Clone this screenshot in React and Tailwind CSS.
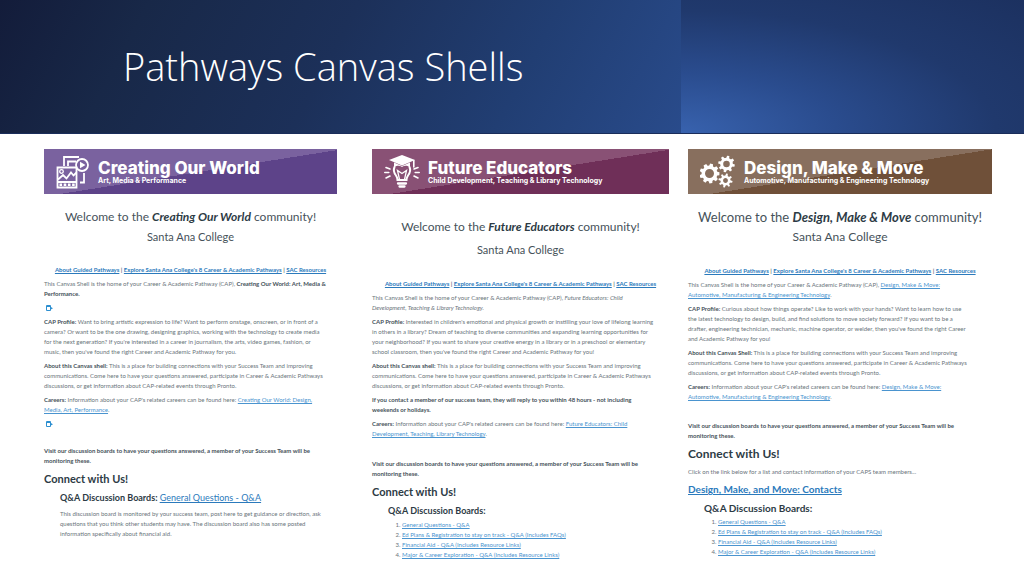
import React from 'react';

const MediaIcon = () => (
  <svg viewBox="0 0 34 34" className="w-[34px] h-[34px] shrink-0" fill="none" stroke="white" strokeWidth="1.8">
    <path d="M8 11V2H23M12 11V6.5H20" />
    <circle cx="26" cy="10" r="6" />
    <path d="M24 6.800v6.400l5.500-3.200z" fill="white" stroke="none" />
    <path d="M28 18V27.500H24" />
    <path d="M1.500 12.500H20.500V32.500H1.500zM1.500 27H20.500" />
    <circle cx="5.500" cy="16.500" r="1.800" strokeWidth="1.300" />
    <path d="M2 24.500l5-4.500 3.500 3.500 4.500-6 2.500 3 3-3" />
    <path d="M3.500 29.800h15.500" strokeWidth="2.600" strokeDasharray="2.600 1.600" />
  </svg>
);

const BulbIcon = () => (
  <svg viewBox="0 0 36 34" className="w-9 h-[34px] shrink-0" fill="none" stroke="white" strokeWidth="1.6" strokeLinecap="round">
    <path d="M18 0L31 5 18 10.500 5 5z" fill="white" stroke="none" />
    <path d="M10 7.500v5c2-2 5.500-2.500 8-.5 2.500-2 6-1.500 8 .5v-5L18 11z" fill="white" stroke="none" />
    <path d="M29.800 5.500V12" />
    <path d="M10.500 12c-1.500 3.500-.5 6 1.500 8.500 1 1.500 1.500 3 1.500 4.500h9c0-1.500.5-3 1.500-4.500 2-2.500 3-5 1.500-8.500" strokeWidth="2" />
    <path d="M15.500 24.500L13.500 15.500l4.500 3 4.500-3-2 9" strokeWidth="1.300" />
    <path d="M14 28.500h8M15.500 31.500h5" strokeWidth="2.300" />
    <path d="M2 12.500l4 1.500M2 23l4-2M0.800 17.500h4M34 12.500l-4 1.500M34 23l-4-2M35.200 17.500h-4" />
  </svg>
);

const Gear = ({ cx, cy, r, teeth, width }) => (
  <g transform={`translate(${cx} ${cy})`}>
    <circle r={r} fill="none" stroke="white" strokeWidth={width} />
    {Array.from({ length: teeth }, (_, i) => (
      <path
        key={i}
        d={`M${-r * 0.34} ${-r}L${-r * 0.24} ${-r - width / 2 - 2}H${r * 0.24}L${r * 0.34} ${-r}z`}
        fill="white"
        transform={`rotate(${(360 / teeth) * i + 12})`}
      />
    ))}
  </g>
);

const GearsIcon = () => (
  <svg viewBox="0 0 36 34" className="w-9 h-[34px] shrink-0">
    <Gear cx={9.5} cy={18.5} r={6.200} teeth={9} width={3.400} />
    <Gear cx={26.500} cy={9} r={4.800} teeth={8} width={3} />
    <Gear cx={25.500} cy={25.500} r={3.700} teeth={8} width={2.600} />
  </svg>
);

const EmbedIcon = () => (
  <div className="flex items-center h-[10px] pl-px">
    <svg viewBox="0 0 8 8" className="w-2 h-2" fill="none" stroke="#2d8fd0">
      <path d="M5.500 5V6.500H1.500V1.500H5.500V3M1.500 2.500H5.500" />
      <path d="M5 2.500L8 4.200 5 6z" fill="#2d8fd0" stroke="none" />
    </svg>
  </div>
);

const A = ({ children }) => (
  <a href="#" className="text-[#4a94cf] underline">{children}</a>
);

const B = ({ children }) => <strong className="font-bold text-[#46525a]">{children}</strong>;

const Banner = ({ icon, title, subtitle, className }) => (
  <div className={`flex items-center gap-2 h-[45px] pl-3 text-white font-['Inter',sans-serif] ${className}`}>
    {icon}
    <div>
      <h2 className="text-[17px] leading-[18px] font-extrabold">{title}</h2>
      <p className="text-[7px] leading-[8px] font-bold">{subtitle}</p>
    </div>
  </div>
);

const Welcome = ({ name, className = 'text-[12px]' }) => (
  <h3 className={`leading-[20px] text-center text-[#46525a] ${className}`}>
    Welcome to the <em className="font-bold text-[#2d3b45]">{name}</em> community!
  </h3>
);

const QuickLinks = () => (
  <nav className="text-center font-bold">
    <a href="#" className="text-[#2b7abc] underline">About Guided Pathways</a> |{' '}
    <a href="#" className="text-[#2b7abc] underline">Explore Santa Ana College's 8 Career &amp; Academic Pathways</a> |{' '}
    <a href="#" className="text-[#2b7abc] underline">SAC Resources</a>
  </nav>
);

const AboutShell = ({ label }) => (
  <p>
    <B>{label}</B> This is a place for building connections with your Success Team and improving<br />
    communications. Come here to have your questions answered, participate in Career &amp; Academic Pathways<br />
    discussions, or get information about CAP-related events through Pronto.
  </p>
);

const Visit = () => (
  <p className="font-bold text-[#46525a]">
    Visit our discussion boards to have your questions answered, a member of your Success Team will be<br />
    monitoring these.
  </p>
);

const Connect = ({ className = 'text-[11px]' }) => (
  <h3 className={`py-1 leading-[17px] font-bold text-[#2d3b45] ${className}`}>Connect with Us!</h3>
);

const boards = [
  'General Questions - Q&A',
  'Ed Plans & Registration to stay on track - Q&A (Includes FAQs)',
  'Financial Aid - Q&A (Includes Resource Links)',
  'Major & Career Exploration - Q&A (Includes Resource Links)',
];

const BoardList = ({ className = 'text-[9px]' }) => (
  <div className="pl-4">
    <h4 className={`leading-[14px] font-bold text-[#2d3b45] ${className}`}>Q&amp;A Discussion Boards:</h4>
    <ol className="list-decimal pl-[14px] pt-[2px]">
      {boards.map((board) => (
        <li key={board}><A>{board}</A></li>
      ))}
    </ol>
  </div>
);

const App = () => {
  return (
    <div className="min-h-screen bg-white font-['Lato',sans-serif]">
      <header className="grid grid-cols-[681fr_343fr] h-[134px] border-b border-[#1a2d5a]">
        <div className="flex items-center pl-[123px] pb-[2px] bg-linear-[118deg,#131c3a_0%,#182848_20%,#1c3059_48%,#213e73_75%,#294b8b_100%]">
          <h1 className="font-['Open_Sans',sans-serif] text-[38px] leading-[48px] font-light text-white whitespace-nowrap">
            Pathways Canvas Shells
          </h1>
        </div>
        <div className="bg-[radial-gradient(ellipse_at_bottom_left,#3862ae_0%,#2a4c8e_32%,#20396d_65%,#1c3160_100%)]" />
      </header>

      <main className="grid grid-cols-[328fr_316fr_304fr] pl-11 pr-8 pt-[15px] text-[6px] leading-[10px] text-[#6a747b] whitespace-nowrap">
        <section className="pr-[35px]">
          <Banner
            icon={<MediaIcon />}
            title="Creating Our World"
            subtitle="Art, Media & Performance"
            className="bg-linear-[171deg,#7a629f_52%,#5d4389_52%]"
          />
          <div className="pt-[13px]">
            <Welcome name="Creating Our World" />
            <p className="text-[11px] leading-[20px] text-center text-[#46525a]">Santa Ana College</p>
          </div>
          <div className="flex flex-col gap-[4px] pt-[18px]">
            <QuickLinks />
            <p>
              This Canvas Shell is the home of your Career &amp; Academic Pathway (CAP), <B>Creating Our World: Art, Media &amp;<br />
              Performance.</B>
            </p>
            <EmbedIcon />
            <p>
              <B>CAP Profile:</B> Want to bring artistic expression to life? Want to perform onstage, onscreen, or in front of a<br />
              camera? Or want to be the one drawing, designing graphics, working with the technology to create media<br />
              for the next generation? If you're interested in a career in journalism, the arts, video games, fashion, or<br />
              music, then you've found the right Career and Academic Pathway for you.
            </p>
            <AboutShell label="About this Canvas shell:" />
            <p>
              <B>Careers:</B> Information about your CAP's related careers can be found here: <A>Creating Our World: Design,<br />
              Media, Art, Performance</A>.
            </p>
            <EmbedIcon />
          </div>
          <div className="pt-[17px]">
            <Visit />
            <Connect />
            <div className="pl-4">
              <h4 className="text-[9px] leading-[14px] font-bold text-[#2d3b45]">
                Q&amp;A Discussion Boards: <a href="#" className="font-normal text-[#2b7abc] underline">General Questions - Q&amp;A</a>
              </h4>
              <p className="pt-1">
                This discussion board is monitored by your success team, post here to get guidance or direction, ask<br />
                questions that you think other students may have. The discussion board also has some posted<br />
                information specifically about financial aid.
              </p>
            </div>
          </div>
        </section>

        <section className="pr-[19px]">
          <Banner
            icon={<BulbIcon />}
            title="Future Educators"
            subtitle="Child Development, Teaching & Library Technology"
            className="bg-linear-[171deg,#895175_52%,#6f2f58_52%]"
          />
          <div className="pt-[23px]">
            <Welcome name="Future Educators" />
            <p className="text-[11px] leading-[26px] text-center text-[#46525a]">Santa Ana College</p>
          </div>
          <div className="flex flex-col gap-[4px] pt-[16px]">
            <QuickLinks />
            <p>
              This Canvas Shell is the home of your Career &amp; Academic Pathway (CAP), <em>Future Educators: Child<br />
              Development, Teaching &amp; Library Technology.</em>
            </p>
            <p>
              <B>CAP Profile:</B> Interested in children's emotional and physical growth or instilling your love of lifelong learning<br />
              in others in a library? Dream of teaching to diverse communities and expanding learning opportunities for<br />
              your neighborhood? If you want to share your creative energy in a library or in a preschool or elementary<br />
              school classroom, then you've found the right Career and Academic Pathway for you!
            </p>
            <AboutShell label="About this Canvas shell:" />
            <p className="font-bold text-[#46525a]">
              If you contact a member of our success team, they will reply to you within 48 hours - not including<br />
              weekends or holidays.
            </p>
            <p>
              <B>Careers:</B> Information about your CAP's related careers can be found here: <A>Future Educators: Child<br />
              Development, Teaching, Library Technology</A>.
            </p>
          </div>
          <div className="pt-5">
            <Visit />
            <Connect />
            <BoardList />
          </div>
        </section>

        <section>
          <Banner
            icon={<GearsIcon />}
            title="Design, Make & Move"
            subtitle="Automotive, Manufacturing & Engineering Technology"
            className="bg-linear-[171deg,#886f5e_52%,#6f5039_52%]"
          />
          <div className="pt-[13px]">
            <Welcome name="Design, Make & Move" className="text-[13px]" />
            <p className="text-[12px] leading-[20px] text-center text-[#46525a]">Santa Ana College</p>
          </div>
          <div className="flex flex-col gap-[4px] pt-[19px]">
            <QuickLinks />
            <p>
              This Canvas Shell is the home of your Career &amp; Academic Pathway (CAP), <A>Design, Make &amp; Move:<br />
              Automotive, Manufacturing &amp; Engineering Technology</A>.
            </p>
            <p>
              <B>CAP Profile:</B> Curious about how things operate? Like to work with your hands? Want to learn how to use<br />
              the latest technology to design, build, and find solutions to move society forward? If you want to be a<br />
              drafter, engineering technician, mechanic, machine operator, or welder, then you've found the right Career<br />
              and Academic Pathway for you!
            </p>
            <AboutShell label="About this Canvas Shell:" />
            <p>
              <B>Careers:</B> Information about your CAP's related careers can be found here: <A>Design, Make &amp; Move:<br />
              Automotive, Manufacturing &amp; Engineering Technology</A>.
            </p>
          </div>
          <div className="pt-[19px]">
            <Visit />
            <Connect className="text-[12px]" />
            <p className="pt-px">Click on the link below for a list and contact information of your CAPS team members...</p>
            <a href="#" className="block text-[10px] leading-[24px] font-bold text-[#2b7abc] underline">Design, Make, and Move: Contacts</a>
            <BoardList className="text-[10px]" />
          </div>
        </section>
      </main>
    </div>
  );
};

export default App;
